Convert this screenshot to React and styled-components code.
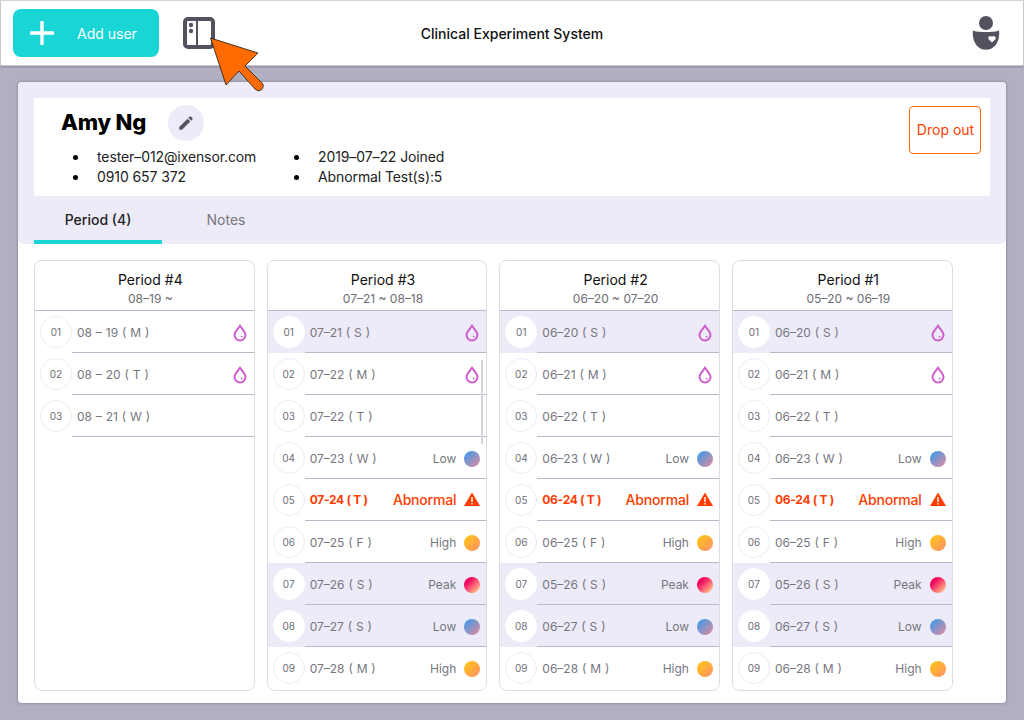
import React from "react";
import styled, { createGlobalStyle } from "styled-components";

const GlobalStyle = createGlobalStyle`
  html, body {
    margin: 0;
    padding: 0;
    background: #b1b0c3;
    font-family: Inter, "Noto Sans", sans-serif;
  }
`;

const Page = styled.div`
  position: relative;
  width: 1024px;
  height: 720px;
  overflow: hidden;
  background: #b1b0c3;
`;

const Header = styled.header`
  display: grid;
  grid-template-columns: 1fr auto 1fr;
  align-items: center;
  height: 66px;
  box-sizing: border-box;
  padding: 0 12px;
  background: #fff;
  border: 1px solid #c8c8cc;
  border-top: 1px solid #d4d4d4;
  box-shadow: 0 1px 2px rgba(60, 60, 80, 0.35);
`;

const HeaderLeft = styled.div`
  display: flex;
  align-items: center;
  gap: 24px;
`;

const AddButton = styled.button`
  display: flex;
  align-items: center;
  width: 146px;
  height: 48px;
  padding: 0 0 0 17px;
  gap: 23px;
  border: 0;
  border-radius: 8px;
  background: #19d5d5;
  color: #fff;
  font: 400 14px Inter, sans-serif;
`;

const Title = styled.div`
  font-size: 14px;
  font-weight: 500;
  color: #111;
`;

const HeaderRight = styled.div`
  display: flex;
  justify-content: flex-end;
  padding-right: 11px;
`;

const Panel = styled.main`
  margin: 16px 18px 0;
  height: 621px;
  border-radius: 4px;
  background: #fff;
  box-shadow: 0 0 3px rgba(60, 60, 80, 0.5);
  overflow: hidden;
`;

const Banner = styled.section`
  padding: 16px 16px 0;
  height: 162px;
  box-sizing: border-box;
  background: #ecebf7;
  border-radius: 0 0 6px 6px;
`;

const ProfileCard = styled.div`
  display: flex;
  justify-content: space-between;
  height: 98px;
  box-sizing: border-box;
  padding: 7px 9px 0 27px;
  background: #fff;
  border-radius: 2px;
`;

const NameRow = styled.div`
  display: flex;
  align-items: center;
  gap: 22px;
`;

const Name = styled.h1`
  margin: 0 0 2px;
  font-size: 22px;
  font-weight: 800;
  letter-spacing: -0.2px;
  color: #000;
`;

const EditButton = styled.div`
  display: flex;
  align-items: center;
  justify-content: center;
  width: 36px;
  height: 36px;
  border-radius: 50%;
  background: #ecebf7;
`;

const InfoColumns = styled.div`
  display: flex;
  margin-top: 6px;
`;

const InfoList = styled.ul`
  width: 221px;
  margin: 0;
  padding: 0 0 0 36px;
  box-sizing: border-box;
  list-style: none;
`;

const InfoItem = styled.li`
  position: relative;
  font-size: 14px;
  line-height: 20px;
  letter-spacing: -0.1px;
  color: #222;
  &::before {
    content: "";
    position: absolute;
    left: -24px;
    top: 8px;
    width: 5px;
    height: 5px;
    border-radius: 50%;
    background: #000;
  }
`;

const DropOut = styled.button`
  width: 72px;
  height: 48px;
  margin-top: 1px;
  padding: 0 0 2px 1px;
  border: 1px solid #ff6a00;
  border-radius: 4px;
  background: #fff;
  color: #ff3d00;
  font: 400 14px Inter, sans-serif;
`;

const Tabs = styled.nav`
  display: flex;
  height: 48px;
`;

const Tab = styled.div`
  display: flex;
  align-items: center;
  justify-content: center;
  width: 128px;
  height: 48px;
  box-sizing: border-box;
  padding-top: 2px;
  font-size: 14px;
  font-weight: ${({ $active }) => ($active ? 500 : 400)};
  color: ${({ $active }) => ($active ? "#222" : "#77767f")};
  border-bottom: 4px solid ${({ $active }) => ($active ? "#19d5d5" : "transparent")};
`;

const Columns = styled.section`
  display: flex;
  gap: 12px;
  padding: 16px 16px 0;
`;

const Column = styled.article`
  position: relative;
  width: 220.67px;
  height: 431px;
  box-sizing: border-box;
  border: 1px solid #dcdce0;
  border-radius: 8px;
  overflow: hidden;
  background: #fff;
`;

const ColumnHead = styled.div`
  display: flex;
  flex-direction: column;
  align-items: center;
  height: 50px;
  box-sizing: border-box;
  padding: 10px 0 0 12px;
  border-bottom: 1px solid #b9b8ca;
`;

const ColumnTitle = styled.div`
  font-size: 14px;
  line-height: 18px;
  color: #111;
`;

const ColumnRange = styled.div`
  margin-top: 2px;
  font-size: 12px;
  line-height: 16px;
  color: #6e6d76;
`;

const Row = styled.div`
  display: flex;
  align-items: center;
  height: 42px;
  background: ${({ $shaded }) => ($shaded ? "#ecebf7" : "#fff")};
`;

const DayBadge = styled.div`
  flex: none;
  display: flex;
  align-items: center;
  justify-content: center;
  width: 32px;
  height: 32px;
  margin-left: 5px;
  box-sizing: border-box;
  border-radius: 50%;
  background: #fff;
  border: 1px solid ${({ $shaded }) => ($shaded ? "#fff" : "#ecebf7")};
  font-size: 10px;
  color: #6e6d76;
`;

const RowBody = styled.div`
  flex: 1;
  display: flex;
  align-items: center;
  justify-content: space-between;
  height: 42px;
  box-sizing: border-box;
  padding: 2px 6px 0 5px;
  border-bottom: 1px solid ${({ $last }) => ($last ? "transparent" : "#b9b8ca")};
`;

const RowDate = styled.span`
  font-size: 12px;
  font-weight: ${({ $alert }) => ($alert ? 700 : 400)};
  letter-spacing: ${({ $alert }) => ($alert ? "-0.3px" : "0")};
  word-spacing: ${({ $alert }) => ($alert ? "0" : "0.5px")};
  margin-top: ${({ $alert }) => ($alert ? "-2px" : "0")};
  color: ${({ $alert }) => ($alert ? "#ff3d00" : "#77767f")};
`;

const RowStatus = styled.span`
  display: flex;
  align-items: center;
  gap: 8px;
  font-size: ${({ $alert }) => ($alert ? "14px" : "12px")};
  font-weight: ${({ $alert }) => ($alert ? 500 : 400)};
  letter-spacing: ${({ $alert }) => ($alert ? "-0.2px" : "0")};
  margin-top: ${({ $alert }) => ($alert ? "-2px" : "0")};
  color: ${({ $alert }) => ($alert ? "#ff3d00" : "#77767f")};
`;

const Dot = styled.span`
  width: 16px;
  height: 16px;
  border-radius: 50%;
  background: ${({ $level }) => dotColors[$level]};
`;

const ScrollThumb = styled.div`
  position: absolute;
  top: 99px;
  right: 3px;
  width: 2px;
  height: 84px;
  background: #d4d4d8;
`;

const Pointer = styled.svg`
  position: absolute;
  left: 205px;
  top: 32px;
`;

const dotColors = {
  Low: "linear-gradient(135deg, #2f9cf0, #e88a9c)",
  High: "linear-gradient(135deg, #ffc90e, #ff8f6b)",
  Peak: "linear-gradient(135deg, #f5005e 25%, #ffc68a 90%)",
};

const Drop = () => (
  <svg width="16" height="18" viewBox="0 0 16 18" fill="none">
    <path
      d="M8 1.8 C10 5 13.5 7.6 13.5 11 A5.5 5.5 0 0 1 2.5 11 C2.5 7.6 6 5 8 1.8 Z"
      stroke="#cf5ccc"
      strokeWidth="2"
    />
    <circle cx="9.6" cy="12.6" r="0.9" fill="#cf5ccc" />
  </svg>
);

const Warning = () => (
  <svg width="16" height="15" viewBox="0 0 16 15">
    <path d="M8 0.5 L16 14 H0 Z" fill="#ff3d00" />
    <rect x="7.3" y="5" width="1.4" height="5" fill="#fff" />
    <rect x="7.3" y="11" width="1.4" height="1.5" fill="#fff" />
  </svg>
);

const day = (date, wd, shaded, status) => ({ date, wd, shaded, status });

const nineDays = (a, b, c, d, e, f, g, h, i) => [
  day(a, "S", true, "drop"),
  day(b, "M", false, "drop"),
  day(c, "T"),
  day(d, "W", false, "Low"),
  day(e, "T", false, "Abnormal"),
  day(f, "F", false, "High"),
  day(g, "S", true, "Peak"),
  day(h, "S", true, "Low"),
  day(i, "M", false, "High"),
];

const periods = [
  {
    title: "Period #4",
    range: "08–19 ~",
    rows: [
      day("08 – 19", "M", false, "drop"),
      day("08 – 20", "T", false, "drop"),
      day("08 – 21", "W"),
    ],
  },
  {
    title: "Period #3",
    range: "07–21 ~ 08–18",
    scroll: true,
    rows: nineDays("07–21", "07–22", "07–22", "07–23", "07-24", "07–25", "07–26", "07–27", "07–28"),
  },
  {
    title: "Period #2",
    range: "06–20 ~ 07–20",
    rows: nineDays("06–20", "06–21", "06–22", "06–23", "06-24", "06–25", "05–26", "06–27", "06–28"),
  },
  {
    title: "Period #1",
    range: "05–20 ~ 06–19",
    rows: nineDays("06–20", "06–21", "06–22", "06–23", "06-24", "06–25", "05–26", "06–27", "06–28"),
  },
];

const DayRow = ({ index, date, wd, shaded, status }) => {
  const alert = status === "Abnormal";
  return (
    <Row $shaded={shaded}>
      <DayBadge $shaded={shaded}>{String(index + 1).padStart(2, "0")}</DayBadge>
      <RowBody $last={index === 8}>
        <RowDate $alert={alert}>{`${date} ( ${wd} )`}</RowDate>
        {status === "drop" && <RowStatus><Drop /></RowStatus>}
        {alert && <RowStatus $alert>Abnormal <Warning /></RowStatus>}
        {dotColors[status] && <RowStatus>{status} <Dot $level={status} /></RowStatus>}
      </RowBody>
    </Row>
  );
};

export default function App() {
  return (
    <Page>
      <GlobalStyle />
      <Header>
        <HeaderLeft>
          <AddButton>
            <svg width="24" height="24" viewBox="0 0 24 24">
              <path d="M12 1 V23 M1 12 H23" stroke="#fff" strokeWidth="3.4" strokeLinecap="round" />
            </svg>
            Add user
          </AddButton>
          <svg width="32" height="32" viewBox="0 0 32 32" fill="none">
            <rect x="2" y="2" width="28" height="28" rx="3" stroke="#53525e" strokeWidth="4" />
            <path d="M14 2 V30" stroke="#53525e" strokeWidth="2" />
            <circle cx="8" cy="8" r="2.2" fill="#53525e" />
            <circle cx="8" cy="14" r="2.2" fill="#53525e" />
          </svg>
        </HeaderLeft>
        <Title>Clinical Experiment System</Title>
        <HeaderRight>
          <svg width="28" height="34" viewBox="0 0 28 34">
            <circle cx="14" cy="7" r="7" fill="#53525e" />
            <path d="M1 14.5 C5 16.5 23 16.5 27 14.5 C28.5 26 22 33.8 14 33.8 C6 33.8 -0.5 26 1 14.5 Z" fill="#53525e" />
            <path d="M20 26.5 L16.6 23.2 A2 2 0 0 1 20 21 A2 2 0 0 1 23.4 23.2 Z" fill="#fff" />
          </svg>
        </HeaderRight>
      </Header>
      <Panel>
        <Banner>
          <ProfileCard>
            <div>
              <NameRow>
                <Name>Amy Ng</Name>
                <EditButton>
                  <svg width="18" height="18" viewBox="0 0 24 24" fill="#55545f">
                    <path d="M3 17.25V21h3.75L17.81 9.94l-3.75-3.75L3 17.25zM20.71 7.04a1 1 0 0 0 0-1.41l-2.34-2.34a1 1 0 0 0-1.41 0l-1.83 1.83 3.75 3.75 1.83-1.83z" />
                  </svg>
                </EditButton>
              </NameRow>
              <InfoColumns>
                <InfoList>
                  <InfoItem>tester–012@ixensor.com</InfoItem>
                  <InfoItem>0910 657 372</InfoItem>
                </InfoList>
                <InfoList>
                  <InfoItem>2019–07–22 Joined</InfoItem>
                  <InfoItem>Abnormal Test(s):5</InfoItem>
                </InfoList>
              </InfoColumns>
            </div>
            <DropOut>Drop out</DropOut>
          </ProfileCard>
          <Tabs>
            <Tab $active>Period (4)</Tab>
            <Tab>Notes</Tab>
          </Tabs>
        </Banner>
        <Columns>
          {periods.map((period) => (
            <Column key={period.title}>
              <ColumnHead>
                <ColumnTitle>{period.title}</ColumnTitle>
                <ColumnRange>{period.range}</ColumnRange>
              </ColumnHead>
              {period.rows.map((row, i) => (
                <DayRow key={i} index={i} {...row} />
              ))}
              {period.scroll && <ScrollThumb />}
            </Column>
          ))}
        </Columns>
      </Panel>
      <Pointer width="64" height="64" viewBox="205 32 64 64">
        <path
          d="M210.5 38 L258 53 L245 66 L263 84 Q264 88 261 90 Q258 92 255 89 L239 71 L226 85 Z"
          fill="#ff6a00"
          stroke="#1a1a1a"
          strokeWidth="0.8"
          strokeLinejoin="round"
        />
      </Pointer>
    </Page>
  );
}
